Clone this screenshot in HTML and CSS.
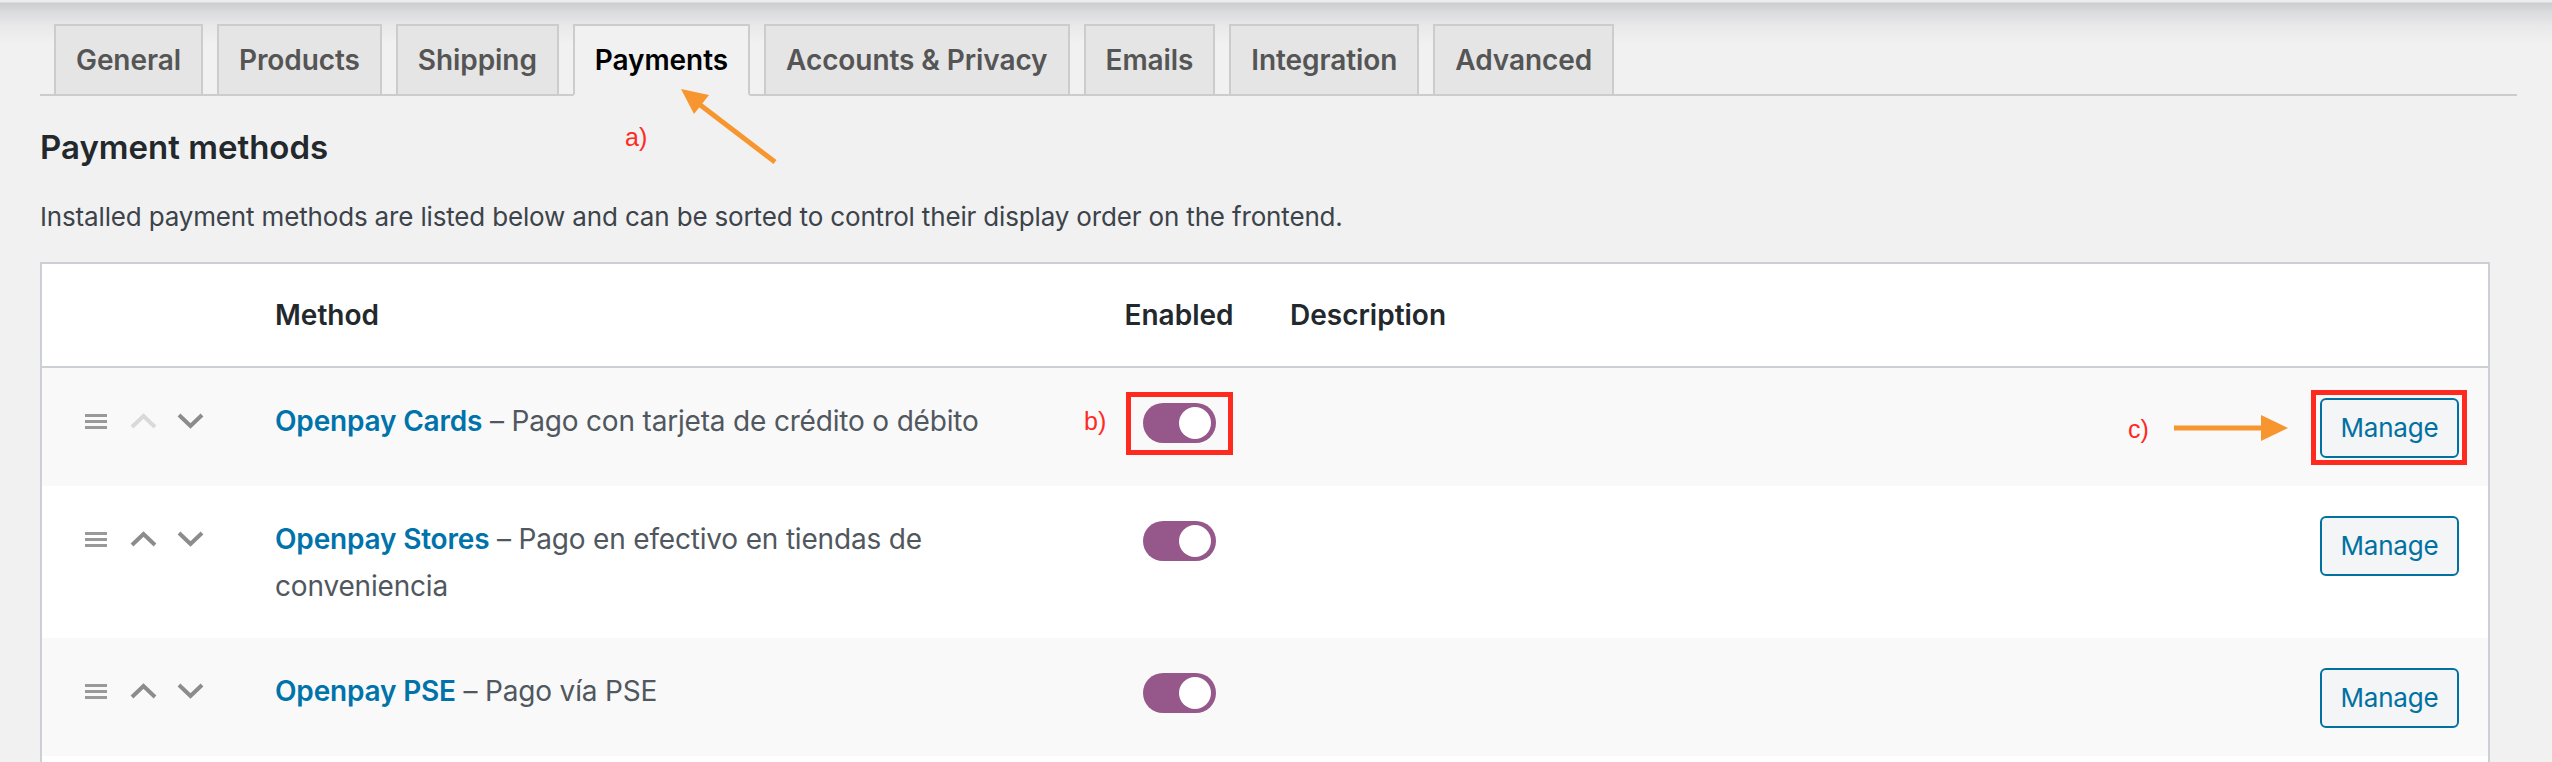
FILE: index.html
```html
<!DOCTYPE html>
<html lang="en">
<head>
  <meta charset="UTF-8">
  <title>Payments settings</title>
  <link rel="stylesheet" href="styles.css">
</head>
<body>
  <div class="wrap">
    <nav class="nav-tab-wrapper">
      <a class="nav-tab" href="#">General</a>
      <a class="nav-tab" href="#">Products</a>
      <a class="nav-tab" href="#">Shipping</a>
      <a class="nav-tab active" href="#">Payments</a>
      <a class="nav-tab" href="#">Accounts &amp; Privacy</a>
      <a class="nav-tab" href="#">Emails</a>
      <a class="nav-tab" href="#">Integration</a>
      <a class="nav-tab" href="#">Advanced</a>
    </nav>

    <h2>Payment methods</h2>
    <p class="intro">Installed payment methods are listed below and can be sorted to control their display order on the frontend.</p>

    <table class="gateways">
      <colgroup>
        <col class="col-sort">
        <col class="col-name">
        <col class="col-status">
        <col>
        <col class="col-action">
      </colgroup>
      <thead>
        <tr>
          <th class="sort"></th>
          <th class="name">Method</th>
          <th class="status">Enabled</th>
          <th class="description">Description</th>
          <th class="action"></th>
        </tr>
      </thead>
      <tbody>
        <tr>
          <td class="sort">
            <div class="sort-icons">
              <svg class="drag" width="22" height="15" viewBox="0 0 22 15"><rect y="0" width="22" height="3"/><rect y="6" width="22" height="3"/><rect y="12" width="22" height="3"/></svg>
              <svg class="chev disabled" width="27" height="16" viewBox="0 0 27 16"><polyline points="2,14 13.5,3 25,14"/></svg>
              <svg class="chev" width="27" height="16" viewBox="0 0 27 16"><polyline points="2,2 13.5,13 25,2"/></svg>
            </div>
          </td>
          <td class="name"><a href="#">Openpay Cards</a> &ndash; Pago con tarjeta de crédito o débito</td>
          <td class="status"><span class="toggle"><span class="knob"></span></span></td>
          <td class="description"></td>
          <td class="action"><a class="button" href="#">Manage</a></td>
        </tr>
        <tr>
          <td class="sort">
            <div class="sort-icons">
              <svg class="drag" width="22" height="15" viewBox="0 0 22 15"><rect y="0" width="22" height="3"/><rect y="6" width="22" height="3"/><rect y="12" width="22" height="3"/></svg>
              <svg class="chev" width="27" height="16" viewBox="0 0 27 16"><polyline points="2,14 13.5,3 25,14"/></svg>
              <svg class="chev" width="27" height="16" viewBox="0 0 27 16"><polyline points="2,2 13.5,13 25,2"/></svg>
            </div>
          </td>
          <td class="name"><a href="#">Openpay Stores</a> &ndash; Pago en efectivo en tiendas de conveniencia</td>
          <td class="status"><span class="toggle"><span class="knob"></span></span></td>
          <td class="description"></td>
          <td class="action"><a class="button" href="#">Manage</a></td>
        </tr>
        <tr>
          <td class="sort">
            <div class="sort-icons">
              <svg class="drag" width="22" height="15" viewBox="0 0 22 15"><rect y="0" width="22" height="3"/><rect y="6" width="22" height="3"/><rect y="12" width="22" height="3"/></svg>
              <svg class="chev" width="27" height="16" viewBox="0 0 27 16"><polyline points="2,14 13.5,3 25,14"/></svg>
              <svg class="chev" width="27" height="16" viewBox="0 0 27 16"><polyline points="2,2 13.5,13 25,2"/></svg>
            </div>
          </td>
          <td class="name"><a href="#">Openpay PSE</a> &ndash; Pago vía PSE</td>
          <td class="status"><span class="toggle"><span class="knob"></span></span></td>
          <td class="description"></td>
          <td class="action"><a class="button" href="#">Manage</a></td>
        </tr>
        <!-- next gateway row, cut off by the screenshot -->
        <tr class="more">
          <td colspan="5"></td>
        </tr>
      </tbody>
    </table>
  </div>

  <!-- annotations drawn on top of the screenshot -->
  <svg class="notes" width="2552" height="762" viewBox="0 0 2552 762">
    <line x1="775" y1="162" x2="699" y2="104" class="arrow"/>
    <polygon points="681,89 709,95 694,114" class="arrow-head"/>
    <text x="625" y="146" class="note-label">a)</text>

    <rect x="1128.5" y="394.5" width="102" height="58" class="note-box"/>
    <text x="1084" y="430" class="note-label">b)</text>

    <rect x="2313.5" y="392.5" width="151" height="70" class="note-box"/>
    <text x="2128" y="438" class="note-label">c)</text>
    <line x1="2174" y1="428" x2="2263" y2="428" class="arrow"/>
    <polygon points="2261,415 2288,428 2261,441" class="arrow-head"/>
  </svg>
</body>
</html>
```

FILE: styles.css
```css
body {
  margin: 0;
  background: #f1f1f1 linear-gradient(to bottom, #ececec 0, #ececec 2px, #cbcdd0 3px, #dadbdd 12px, #e9e9ea 26px, #f1f1f1 44px) no-repeat;
  background-size: 100% 44px;
  font-family: Inter, "Noto Sans", sans-serif;
  color: #3c434a;
  position: relative;
  overflow: hidden;
}

.wrap {
  padding: 24px 35px 0 40px;
}

.nav-tab-wrapper {
  display: flex;
  border-bottom: 2px solid #ccc;
}

.nav-tab {
  box-sizing: border-box;
  height: 72px;
  margin-left: 14px;
  margin-bottom: -2px;
  padding: 0 20px;
  border: 2px solid #ccc;
  background: #e5e5e5;
  color: #555;
  font-size: 28px;
  font-weight: 600;
  line-height: 68px;
  letter-spacing: -0.08px;
  text-decoration: none;
  white-space: nowrap;
}

.nav-tab.active {
  background: #f1f1f1;
  border-bottom-color: #f1f1f1;
  color: #000;
}

h2 {
  margin: 30px 0 0;
  font-size: 33px;
  line-height: 43px;
  font-weight: 600;
  color: #23282d;
}

.intro {
  margin: 28px 0 26px;
  font-size: 26px;
  line-height: 39px;
  letter-spacing: -0.16px;
  color: #3c434a;
}

.gateways {
  width: 2450px;
  table-layout: fixed;
  border: 2px solid #ccd0d4;
  border-bottom: none;
  border-spacing: 0;
  background: #fff;
}

.col-sort { width: 213px; }
.col-name { width: 833px; }
.col-status { width: 182px; }
.col-action { width: 200px; }

.gateways th {
  padding: 28px 20px;
  border-bottom: 2px solid #ccd0d4;
  font-size: 28px;
  line-height: 46px;
  font-weight: 600;
  color: #23282d;
  text-align: left;
}

.gateways td {
  padding: 30px 20px 28px;
  font-size: 28px;
  line-height: 47px;
  letter-spacing: -0.18px;
  vertical-align: top;
  color: #50575e;
}

.gateways tbody tr:nth-child(odd) {
  background: #f9f9f9;
}

.gateways tr.more td {
  height: 6px;
  padding: 0;
  background: #fff;
}

.gateways .status {
  text-align: center;
}

.gateways td.sort {
  padding-left: 43px;
}

.sort-icons {
  display: flex;
  align-items: center;
  height: 46px;
}

.sort-icons .drag {
  fill: #999;
  margin-right: 23px;
}

.sort-icons .chev {
  fill: none;
  stroke: #8c8c8c;
  stroke-width: 4;
  margin-right: 20px;
}

.sort-icons .chev.disabled {
  stroke: #d9d9d9;
}

.gateways td.name a {
  color: #0073aa;
  font-weight: 600;
  text-decoration: none;
}

.toggle {
  display: inline-flex;
  align-items: center;
  justify-content: flex-end;
  box-sizing: border-box;
  width: 73px;
  height: 40px;
  margin-top: 5px;
  padding: 0 5px;
  border-radius: 20px;
  background: #96588a;
  vertical-align: top;
}

.toggle .knob {
  width: 32px;
  height: 32px;
  border-radius: 50%;
  background: #fff;
}

.gateways td.action {
  padding-right: 29px;
}

.button {
  display: block;
  box-sizing: border-box;
  width: 139px;
  height: 60px;
  margin-left: auto;
  border: 2px solid #0071a1;
  border-radius: 6px;
  background: #f3f5f6;
  color: #0071a1;
  font-size: 26px;
  line-height: 56px;
  text-align: center;
  text-decoration: none;
}

.notes {
  position: absolute;
  top: 0;
  left: 0;
  pointer-events: none;
}

.arrow {
  stroke: #f7962f;
  stroke-width: 5;
}

.arrow-head {
  fill: #f7962f;
}

.note-box {
  fill: none;
  stroke: #ff2a1f;
  stroke-width: 5;
}

.note-label {
  fill: #ff2a1f;
  font-family: "Liberation Sans", Arial, sans-serif;
  font-size: 25px;
}
```
